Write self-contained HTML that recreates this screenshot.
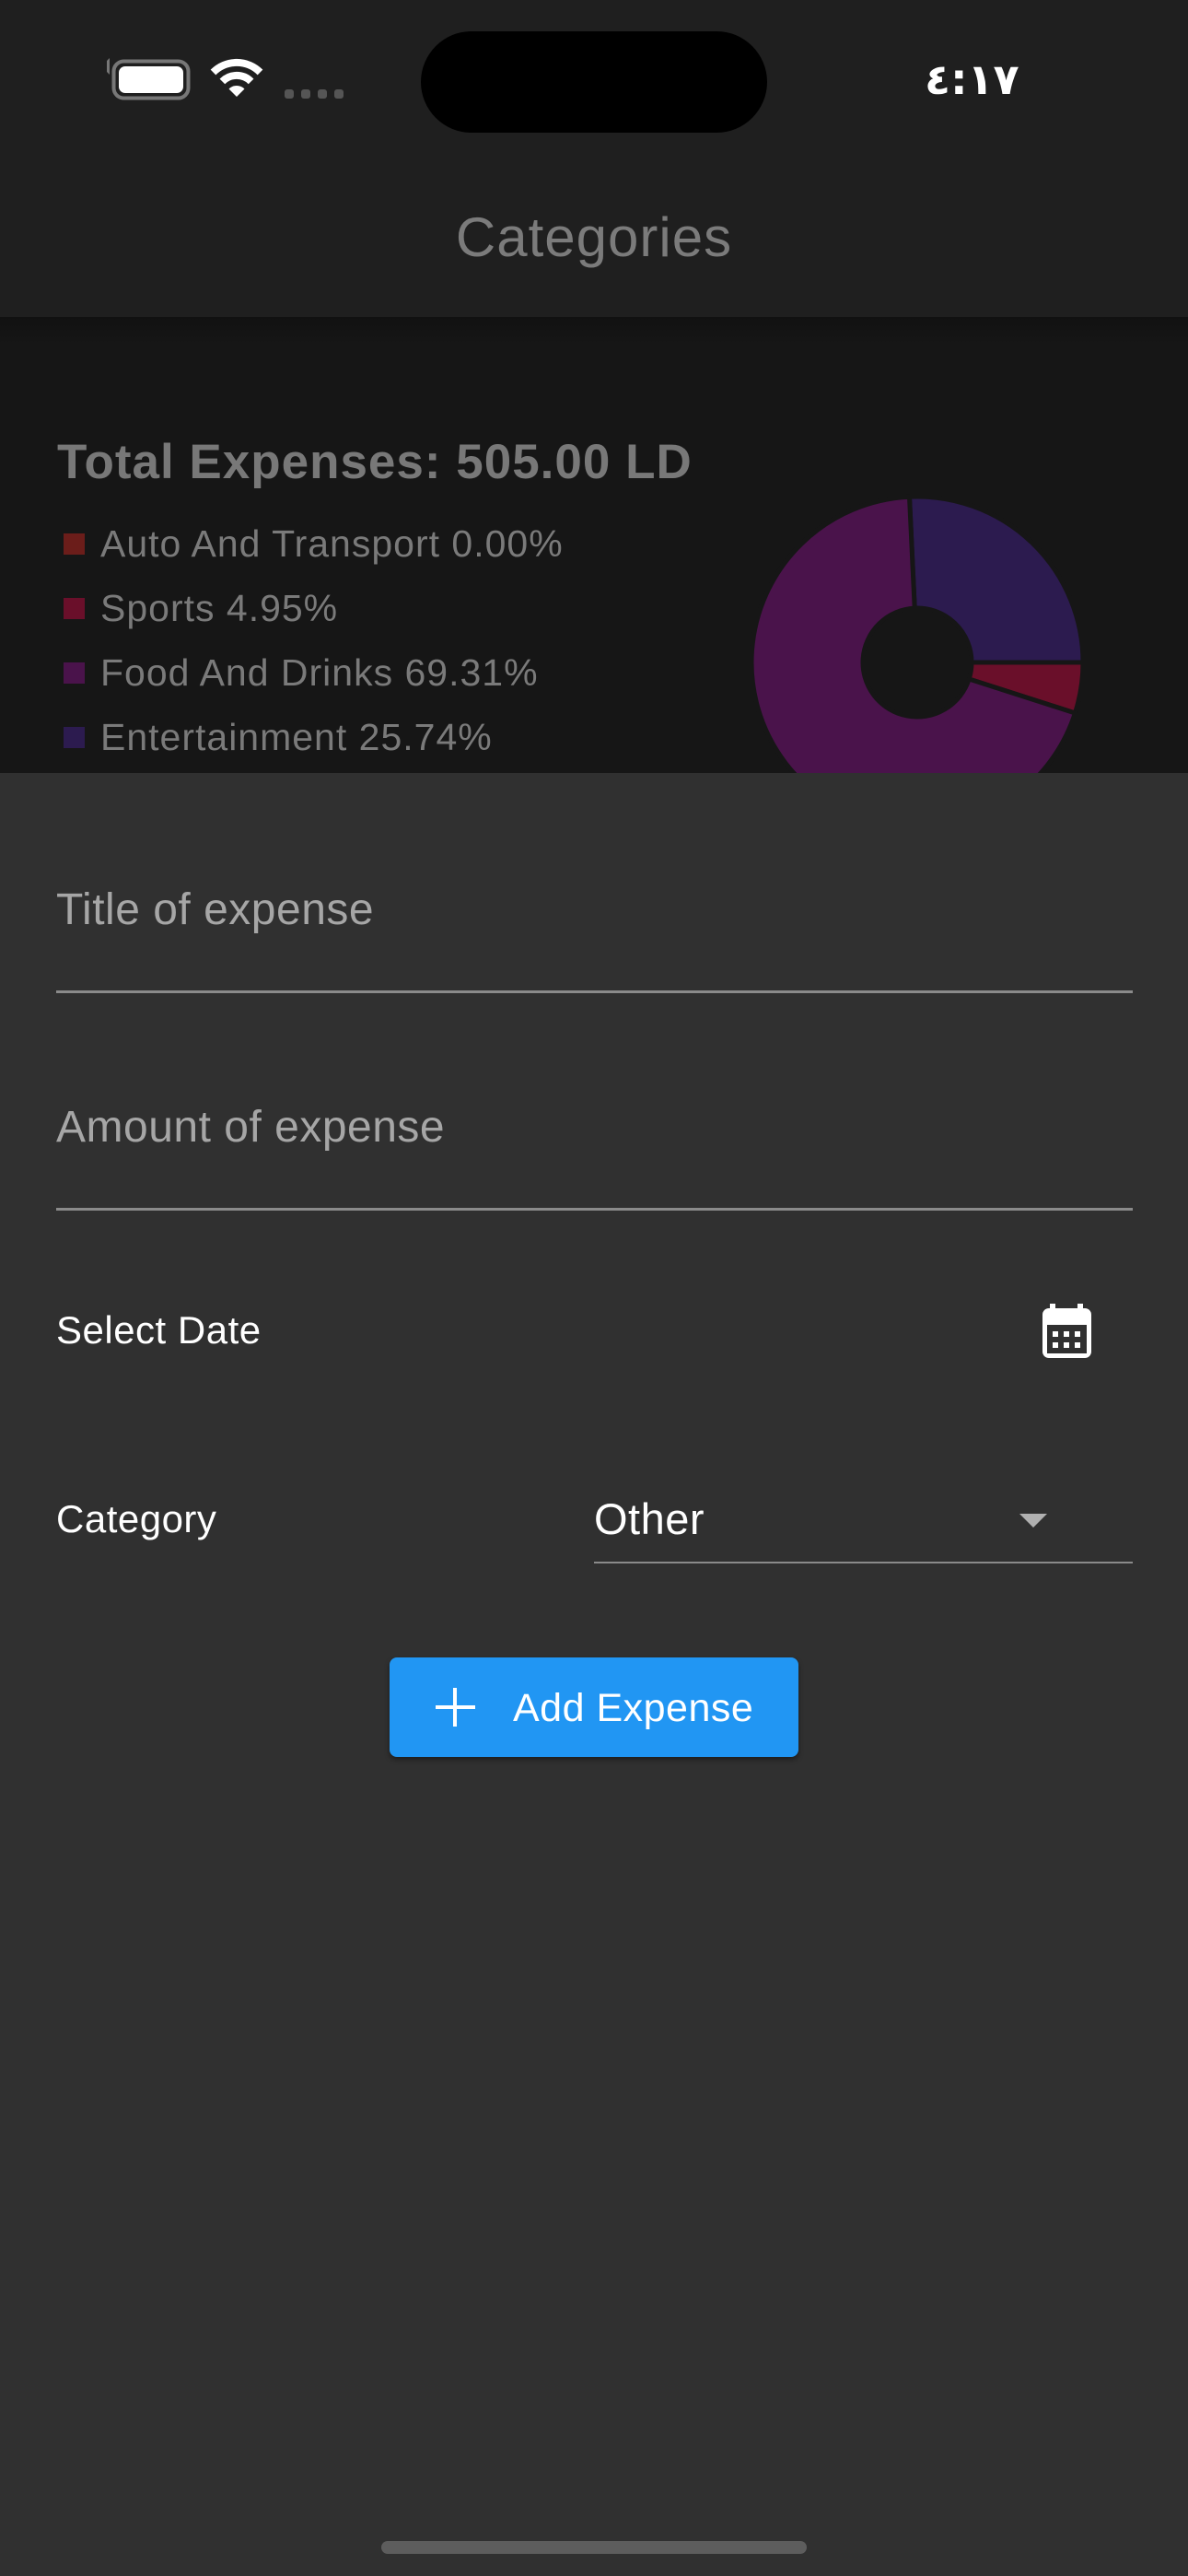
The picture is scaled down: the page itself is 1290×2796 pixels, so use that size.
<!DOCTYPE html>
<html><head><meta charset="utf-8"><style>
html,body{margin:0;padding:0}
body{width:1290px;height:2796px;position:relative;overflow:hidden;background:#303030;font-family:"Liberation Sans","Noto Sans CJK SC",sans-serif}
.a{position:absolute;white-space:nowrap}
</style></head><body>
<div class="a" style="left:0;top:0;width:1290px;height:344px;background:#1f1f1f"></div>
<div class="a" style="left:0;top:344px;width:1290px;height:495px;background:#161616"></div>
<div class="a" style="left:0;top:344px;width:1290px;height:30px;background:linear-gradient(#111,#161616)"></div>
<!-- status bar -->
<div class="a" style="left:457px;top:34px;width:376px;height:110px;border-radius:55px;background:#000"></div>
<div class="a" style="left:1004px;top:56px;font-size:46px;font-weight:bold;color:#fff;line-height:60px;font-family:'DejaVu Sans',sans-serif">٤:١٧</div>
<svg class="a" style="left:100px;top:50px" width="300" height="80" viewBox="0 0 300 80">
<path d="M19 13 L16 16 L16 28 L19 31 Z" fill="#777"/>
<rect x="23.5" y="16.5" width="81" height="40" rx="11" fill="none" stroke="#777" stroke-width="4"/>
<rect x="29" y="22" width="70" height="29" rx="7" fill="#fff"/>
<rect x="209" y="47" width="10" height="10" rx="3" fill="#555"/>
<rect x="227" y="47" width="10" height="10" rx="3" fill="#555"/>
<rect x="245" y="47" width="10" height="10" rx="3" fill="#555"/>
<rect x="263" y="47" width="10" height="10" rx="3" fill="#555"/>
</svg>
<svg class="a" style="left:0;top:0" width="400" height="130" viewBox="0 0 400 130">
<path d="M231.5 78.5 A36 36 0 0 1 282.5 78.5" fill="none" stroke="#fff" stroke-width="8"/>
<path d="M241.4 88.4 A22 22 0 0 1 272.6 88.4" fill="none" stroke="#fff" stroke-width="8"/>
<path d="M257 105 L248.5 96.5 A12 12 0 0 1 265.5 96.5 Z" fill="#fff"/>
</svg>
<div class="a" style="left:0;width:1290px;top:222px;text-align:center;font-size:60px;color:#7b7b7b;line-height:72px;letter-spacing:1px">Categories</div>
<!-- summary -->
<div class="a" style="left:62px;top:472px;font-size:53px;font-weight:bold;color:#787878;line-height:60px;letter-spacing:1px">Total Expenses: 505.00 LD</div>
<div class="a" style="left:69px;top:579px;width:23px;height:23px;background:#6b1d1a"></div>
<div class="a" style="left:69px;top:649px;width:23px;height:23px;background:#6a0f2a"></div>
<div class="a" style="left:69px;top:719px;width:23px;height:23px;background:#4a134b"></div>
<div class="a" style="left:69px;top:789px;width:23px;height:23px;background:#2c1b4f"></div>
<div class="a" style="left:109px;top:565px;font-size:41px;color:#7a7a7a;line-height:50px;letter-spacing:1px">Auto And Transport 0.00%</div>
<div class="a" style="left:109px;top:635px;font-size:41px;color:#7a7a7a;line-height:50px;letter-spacing:1px">Sports 4.95%</div>
<div class="a" style="left:109px;top:705px;font-size:41px;color:#7a7a7a;line-height:50px;letter-spacing:1px">Food And Drinks 69.31%</div>
<div class="a" style="left:109px;top:775px;font-size:41px;color:#7a7a7a;line-height:50px;letter-spacing:1px">Entertainment 25.74%</div>
<svg class="a" style="left:0;top:0" width="1290" height="839" viewBox="0 0 1290 839">
<g stroke="#161616" stroke-width="5" stroke-linejoin="miter">
<path d="M987.5 539.2 A180 180 0 0 1 1176 719 L1055 719 A59 59 0 0 0 993.2 660.1 Z" fill="#2c1b4f"/>
<path d="M1176 719 A180 180 0 0 1 1167.4 774 L1052.2 737 A59 59 0 0 0 1055 719 Z" fill="#6a0f2a"/>
<path d="M1167.4 774 A180 180 0 1 1 987.5 539.2 L993.2 660.1 A59 59 0 1 0 1052.2 737 Z" fill="#4a134b"/>
</g>
<circle cx="996" cy="719" r="57" fill="#161616"/>
</svg>
<!-- sheet -->
<div class="a" style="left:0;top:839px;width:1290px;height:1957px;background:#303030"></div>
<div class="a" style="left:61px;top:959px;font-size:48px;color:#a6a6a6;line-height:58px;letter-spacing:0.5px">Title of expense</div>
<div class="a" style="left:61px;top:1075px;width:1169px;height:3px;background:#8a8a8a"></div>
<div class="a" style="left:61px;top:1195px;font-size:48px;color:#a6a6a6;line-height:58px;letter-spacing:0.5px">Amount of expense</div>
<div class="a" style="left:61px;top:1311px;width:1169px;height:3px;background:#8a8a8a"></div>
<div class="a" style="left:61px;top:1419px;font-size:42px;color:#fff;line-height:50px;letter-spacing:0.5px">Select Date</div>
<svg class="a" style="left:1128px;top:1412px" width="62" height="66" viewBox="1128 1412 62 66">
<rect x="1132" y="1420" width="53" height="54" rx="7" fill="#fff"/>
<rect x="1140" y="1415" width="6" height="8" fill="#fff"/>
<rect x="1170" y="1415" width="6" height="8" fill="#fff"/>
<rect x="1137" y="1438" width="43" height="31" fill="#303030"/>
<g fill="#fff"><rect x="1143" y="1445" width="6" height="6"/><rect x="1155" y="1445" width="6" height="6"/><rect x="1167" y="1445" width="6" height="6"/><rect x="1143" y="1457" width="6" height="6"/><rect x="1155" y="1457" width="6" height="6"/><rect x="1167" y="1457" width="6" height="6"/></g>
</svg>
<div class="a" style="left:61px;top:1624px;font-size:42px;color:#fff;line-height:50px;letter-spacing:0.5px">Category</div>
<div class="a" style="left:645px;top:1621px;font-size:47px;color:#fff;line-height:56px;letter-spacing:0.5px">Other</div>
<svg class="a" style="left:1105px;top:1641px" width="34" height="18"><path d="M2 2 L32 2 L17 17 Z" fill="#b0b0b0"/></svg>
<div class="a" style="left:645px;top:1695px;width:585px;height:2px;background:#8a8a8a"></div>
<div class="a" style="left:423px;top:1799px;width:444px;height:108px;background:#2196f3;border-radius:8px;box-shadow:0 3px 6px rgba(0,0,0,.4)"></div>
<div class="a" style="left:492px;top:1832px;width:4px;height:42px;background:#fff"></div>
<div class="a" style="left:473px;top:1851px;width:43px;height:4px;background:#fff"></div>
<div class="a" style="left:557px;top:1828px;font-size:43px;color:#fff;line-height:52px;letter-spacing:0.5px">Add Expense</div>
<div class="a" style="left:414px;top:2758px;width:462px;height:14px;border-radius:7px;background:#5d5d5d"></div>
</body></html>
